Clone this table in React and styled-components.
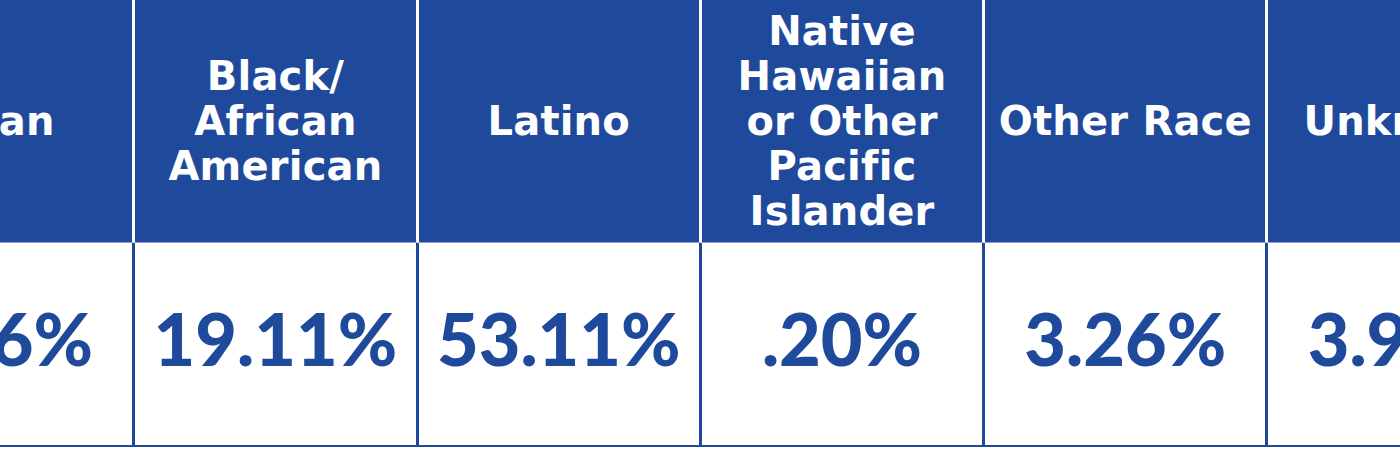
import React from 'react';
import styled, { createGlobalStyle } from 'styled-components';

const GlobalStyle = createGlobalStyle`
  html, body {
    margin: 0;
    padding: 0;
    background: #ffffff;
    overflow: hidden;
  }
`;

const BLUE = '#1f4a9c';

const Page = styled.div`
  width: 1400px;
  height: 449px;
  overflow: hidden;
  background: #fff;
`;

const Table = styled.div`
  display: grid;
  grid-template-columns: repeat(6, 283.3px);
  grid-template-rows: 243px 202px;
  margin-left: -148px;
  width: max-content;
  border-bottom: 2px solid ${BLUE};
  font-weight: bold;
`;

const HeaderCell = styled.div`
  display: flex;
  align-items: center;
  justify-content: center;
  text-align: center;
  background: ${BLUE};
  color: #fff;
  border-right: 3px solid #fff;
  border-bottom: 1px solid #8d9bd2;
  font-family: "DejaVu Sans", "Liberation Sans", sans-serif;
  font-size: 40px;
  line-height: 45px;
  letter-spacing: 0.2px;
  padding: 0 6px;
`;

const ValueCell = styled.div`
  display: flex;
  align-items: center;
  justify-content: center;
  color: ${BLUE};
  border-right: 3px solid ${BLUE};
  font-family: Lato, "Liberation Sans", sans-serif;
  font-weight: 900;
  font-size: 72px;
  letter-spacing: 0;
  padding-bottom: 12px;
`;

const rows = [
  { label: 'Asian', value: '2.16%' },
  { label: <>Black/<br />African<br />American</>, value: '19.11%' },
  { label: 'Latino', value: '53.11%' },
  { label: <>Native<br />Hawaiian<br />or Other<br />Pacific<br />Islander</>, value: '.20%' },
  { label: 'Other Race', value: '3.26%' },
  { label: 'Unknown', value: '3.94%' },
];

export default function App() {
  return (
    <Page>
      <GlobalStyle />
      <Table>
        {rows.map((r, i) => (
          <HeaderCell key={'h' + i}>{r.label}</HeaderCell>
        ))}
        {rows.map((r, i) => (
          <ValueCell key={'v' + i}>{r.value}</ValueCell>
        ))}
      </Table>
    </Page>
  );
}
